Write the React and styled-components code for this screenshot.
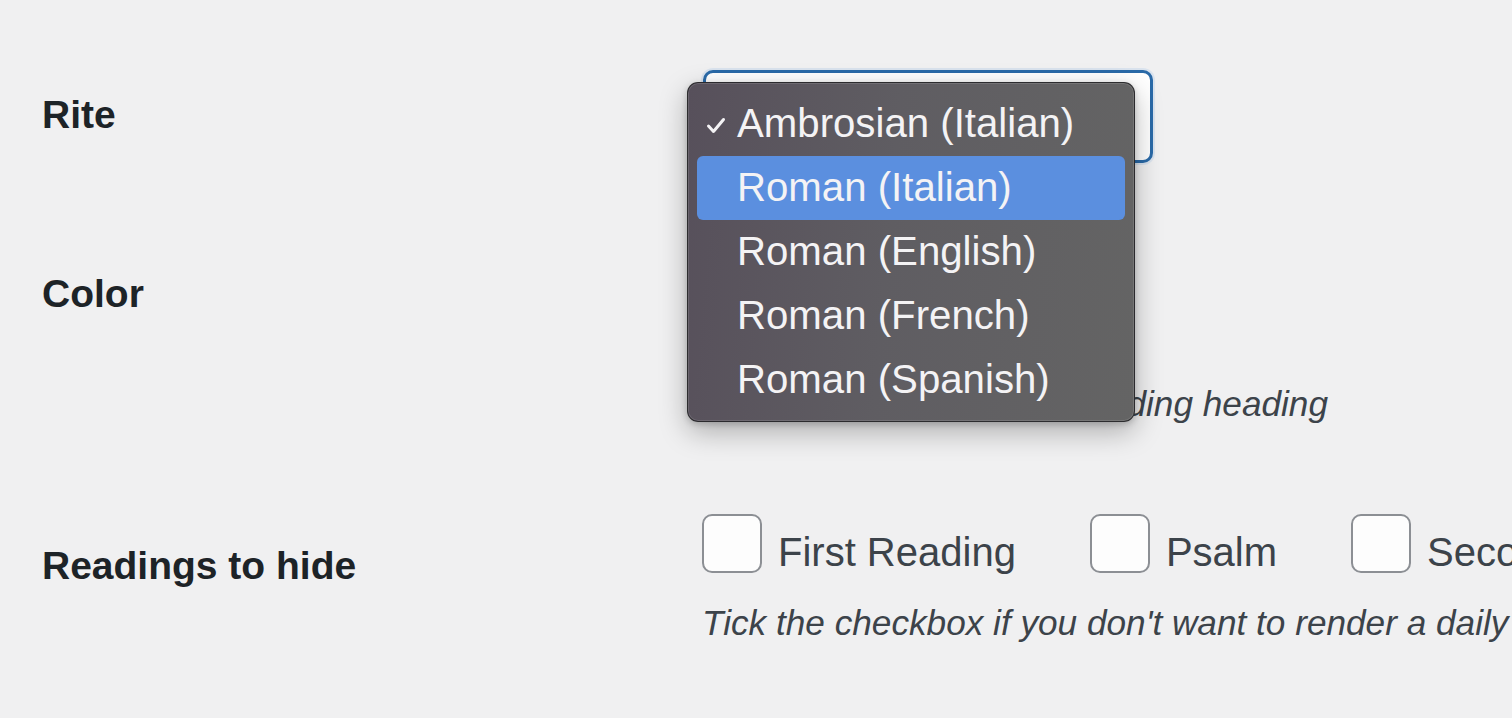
import React from "react";
import styled, { createGlobalStyle } from "styled-components";

const Global = createGlobalStyle`
  html, body { margin: 0; padding: 0; background: #f0f0f1; overflow: hidden; }
  body { font-family: "Liberation Sans", Arial, sans-serif; }
`;

const Page = styled.div`
  width: 1512px;
  height: 718px;
  box-sizing: border-box;
  padding: 70px 0 0 42px;
  overflow: hidden;
`;

const Row = styled.div`
  display: grid;
  grid-template-columns: 660px 1fr;
  margin-top: ${(p) => p.$top || 0}px;
  position: relative;
  z-index: ${(p) => p.$z || 1};
`;

const Label = styled.div`
  font-size: 39px;
  line-height: 1.2;
  font-weight: 700;
  color: #1d2327;
  margin-top: ${(p) => p.$offset}px;
`;

const Field = styled.div`
  display: flex;
  flex-direction: column;
  align-items: flex-start;
  min-width: 0;
`;

const SelectWrap = styled.div`
  position: relative;
  margin-left: 1px;
`;

const SelectBox = styled.div`
  box-sizing: border-box;
  width: ${(p) => p.$w}px;
  height: 93px;
  border-radius: 10px;
  background: #ffffff;
  border: ${(p) => (p.$focus ? "3px solid #2a6aa8" : "2px solid #8c8f94")};
  box-shadow: ${(p) => (p.$focus ? "0 0 0 2px rgba(120,170,230,0.18)" : "none")};
`;

const Menu = styled.div`
  position: absolute;
  left: -16px;
  top: 12px;
  width: 448px;
  box-sizing: border-box;
  padding: 9px 9px;
  border-radius: 11px;
  background: linear-gradient(95deg, #57505b 0%, #5f5d62 45%, #646464 100%);
  border: 1px solid rgba(35, 35, 38, 0.85);
  box-shadow: inset 0 0 0 1px rgba(255, 255, 255, 0.12),
    0 10px 28px rgba(0, 0, 0, 0.28), 0 2px 6px rgba(0, 0, 0, 0.18);
`;

const Item = styled.div`
  position: relative;
  height: 64px;
  line-height: 64px;
  padding-left: 40px;
  border-radius: 6px;
  font-size: 40.2px;
  color: #f4f3f5;
  white-space: nowrap;
  background: ${(p) => (p.$active ? "#5b8fdf" : "transparent")};
`;

const Check = styled.svg`
  position: absolute;
  left: 9px;
  top: 25px;
`;

const Desc = styled.p`
  margin: ${(p) => p.$top}px 0 0;
  font-size: 35.2px;
  line-height: 1.4;
  font-style: italic;
  color: #3c434a;
  white-space: nowrap;
`;

const CheckList = styled.div`
  display: flex;
  align-items: flex-start;
  gap: 74px;
  height: 59px;
  white-space: nowrap;
`;

const CheckItem = styled.label`
  display: flex;
  align-items: flex-start;
  gap: 16px;
`;

const Box = styled.span`
  box-sizing: border-box;
  width: 60px;
  height: 59px;
  border: 2px solid #8c8f94;
  border-radius: 10px;
  background: #fdfdfd;
  flex: none;
`;

const CheckText = styled.span`
  font-size: 40px;
  line-height: 51px;
  padding-top: 13px;
  color: #3c434a;
`;

const options = [
  "Ambrosian (Italian)",
  "Roman (Italian)",
  "Roman (English)",
  "Roman (French)",
  "Roman (Spanish)",
];

export default function App() {
  return (
    <>
      <Global />
      <Page>
        <Row $z={5}>
          <Label $offset={22}>Rite</Label>
          <Field>
            <SelectWrap>
              <SelectBox $w={450} $focus />
              <Menu>
                {options.map((o, i) => (
                  <Item key={o} $active={i === 1}>
                    {i === 0 && (
                      <Check width="20" height="17" viewBox="0 0 20 17">
                        <path
                          d="M2.5 9 L7.5 14.5 L17.5 2.5"
                          fill="none"
                          stroke="#f4f3f5"
                          strokeWidth="3"
                          strokeLinecap="round"
                          strokeLinejoin="round"
                        />
                      </Check>
                    )}
                    {o}
                  </Item>
                ))}
              </Menu>
            </SelectWrap>
          </Field>
        </Row>
        <Row $top={85}>
          <Label $offset={23}>Color</Label>
          <Field>
            <SelectWrap>
              <SelectBox $w={300} />
            </SelectWrap>
            <Desc $top={38}>Choose the color of the reading heading</Desc>
          </Field>
        </Row>
        <Row $top={86}>
          <Label $offset={29}>Readings to hide</Label>
          <Field>
            <CheckList>
              <CheckItem>
                <Box />
                <CheckText>First Reading</CheckText>
              </CheckItem>
              <CheckItem>
                <Box />
                <CheckText>Psalm</CheckText>
              </CheckItem>
              <CheckItem>
                <Box />
                <CheckText>Second Reading</CheckText>
              </CheckItem>
            </CheckList>
            <Desc $top={25}>
              Tick the checkbox if you don't want to render a daily reading
            </Desc>
          </Field>
        </Row>
      </Page>
    </>
  );
}
